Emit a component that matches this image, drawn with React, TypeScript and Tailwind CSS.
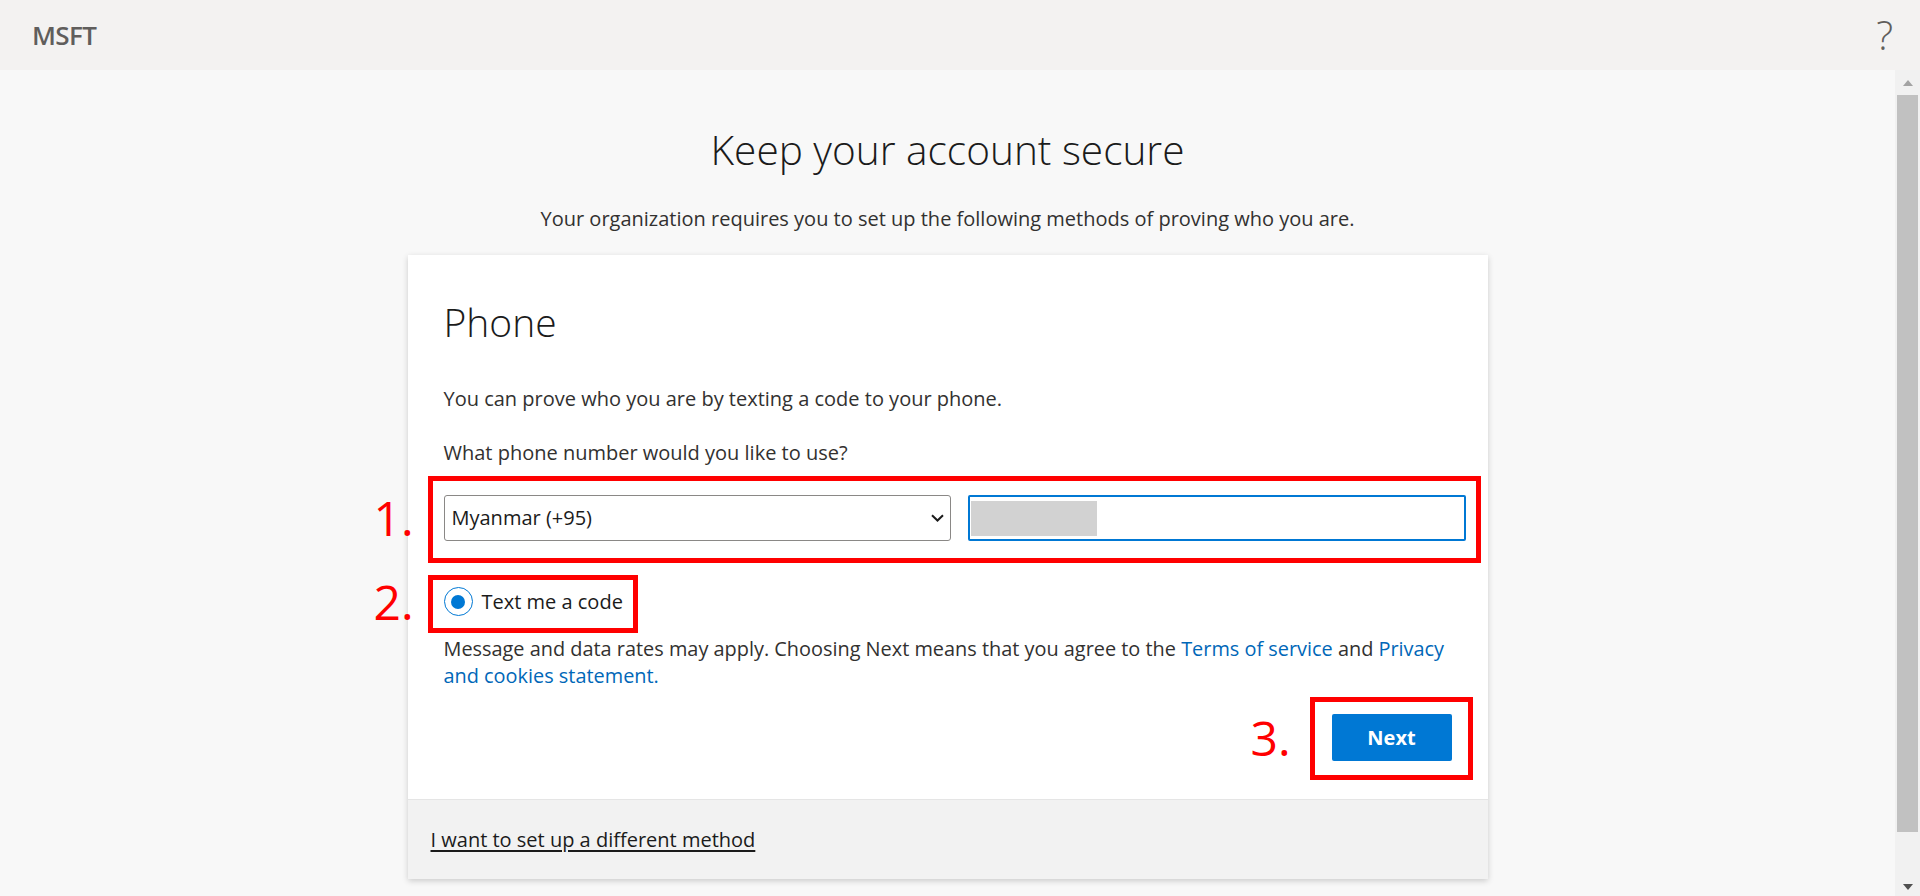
import React from "react";

function RedBox({ className }: { className: string }) {
  return <div className={`pointer-events-none absolute border-[5px] border-[#ff0000] ${className}`} />;
}

function Step({ n }: { n: string }) {
  return (
    <div className="absolute inset-y-0 right-full mr-[30px] flex items-center">
      <span className="text-[48px] leading-none text-[#ff0000]">{n}</span>
    </div>
  );
}

export default function App() {
  return (
    <div className="h-screen flex flex-col overflow-hidden bg-[#f8f8f8] font-['Open_Sans',sans-serif] text-[#323130]">
      {/* top bar */}
      <header className="h-[70px] shrink-0 bg-[#f3f2f1] flex items-center justify-between pl-[32px] pr-[27px]">
        <span className="text-[26px] font-semibold text-[#605e5c] tracking-tight">MSFT</span>
        <span className="text-[40px] font-light leading-none text-[#605e5c]">?</span>
      </header>

      <div className="flex-1 flex min-h-0">
        <main className="flex-1 flex flex-col items-center pt-[56px]">
          <h1 className="text-[40.6px] leading-[48px] font-light text-[#1b1b1b]">Keep your account secure</h1>
          <p className="mt-[31px] text-[20px] leading-[28px]">
            Your organization requires you to set up the following methods of proving who you are.
          </p>

          {/* card */}
          <div className="mt-[22px] w-[1080px] bg-white shadow-[0_2px_6px_rgba(0,0,0,0.18)]">
            <div className="px-[36px] pt-[41px] pb-[38px]">
              <h2 className="text-[39px] leading-[52px] font-light text-[#1b1b1b]">Phone</h2>
              <p className="mt-[37px] text-[20px] leading-[28px]">
                You can prove who you are by texting a code to your phone.
              </p>
              <p className="mt-[26px] text-[20px] leading-[28px]">What phone number would you like to use?</p>

              <div className="relative mt-[28px] mr-[-14px] flex gap-[17px]">
                <RedBox className="-left-[16px] -right-[15px] -top-[19px] -bottom-[22px]" />
                <Step n="1." />
                <div className="flex-1 h-[46px] rounded-[3px] border border-[#8a8886] flex items-center justify-between pl-[7px] pr-[6px]">
                  <span className="text-[20px] text-[#1b1b1b]">Myanmar (+95)</span>
                  <svg width="13" height="8" viewBox="0 0 13 8" fill="none">
                    <path d="M1 1.2l5.5 5.3 5.5-5.3" stroke="#1b1b1b" strokeWidth="2" />
                  </svg>
                </div>
                <div className="flex-1 h-[46px] rounded-[2px] border-2 border-[#0078d4] flex items-center pl-[1px]">
                  <div className="w-[126px] h-[35px] bg-[#d2d2d2]" />
                </div>
              </div>

              <div className="relative mt-[46px] w-fit flex items-center gap-[9px]">
                <RedBox className="-left-[16px] -right-[15px] -top-[12px] -bottom-[17px]" />
                <Step n="2." />
                <div className="w-[29px] h-[29px] rounded-full border border-[#0078d4] flex items-center justify-center">
                  <div className="w-[14px] h-[14px] rounded-full bg-[#0078d4]" />
                </div>
                <span className="text-[20px] leading-[28px] text-[#1b1b1b]">Text me a code</span>
              </div>

              <p className="mt-[19px] text-[19.9px] leading-[27px]">
                Message and data rates may apply. Choosing Next means that you agree to the{" "}
                <a className="text-[#0067b8]">Terms of service</a> and <a className="text-[#0067b8]">Privacy</a>
                <br />
                <a className="text-[#0067b8]">and cookies statement.</a>
              </p>

              <div className="mt-[25px] flex justify-end">
                <div className="relative">
                  <RedBox className="-left-[22px] -right-[21px] -top-[17px] -bottom-[19px]" />
                  <div className="absolute inset-y-0 right-full mr-[41px] flex items-center">
                    <span className="text-[48px] leading-none text-[#ff0000]">3.</span>
                  </div>
                  <button className="w-[120px] h-[47px] rounded-[2px] bg-[#0078d4] text-white text-[20px] font-bold">
                    Next
                  </button>
                </div>
              </div>
            </div>

            <div className="h-[80px] bg-[#f2f2f2] border-t border-[#e5e5e5] flex items-center px-[23px]">
              <a className="text-[20px] text-[#1b1b1b] underline underline-offset-[3px]">
                I want to set up a different method
              </a>
            </div>
          </div>
        </main>

        {/* scrollbar */}
        <div className="w-[25px] shrink-0 bg-[#f1f1f1] flex flex-col items-center">
          <div className="h-[25px] flex items-center justify-center">
            <svg width="10" height="6" viewBox="0 0 10 6">
              <path d="M0 6L5 0l5 6z" fill="#a3a3a3" />
            </svg>
          </div>
          <div className="w-[21px] flex-1 bg-[#c1c1c1]" />
          <div className="h-[64px] flex items-end justify-center pb-[6px]">
            <svg width="10" height="6" viewBox="0 0 10 6">
              <path d="M0 0l5 6 5-6z" fill="#505050" />
            </svg>
          </div>
        </div>
      </div>
    </div>
  );
}
